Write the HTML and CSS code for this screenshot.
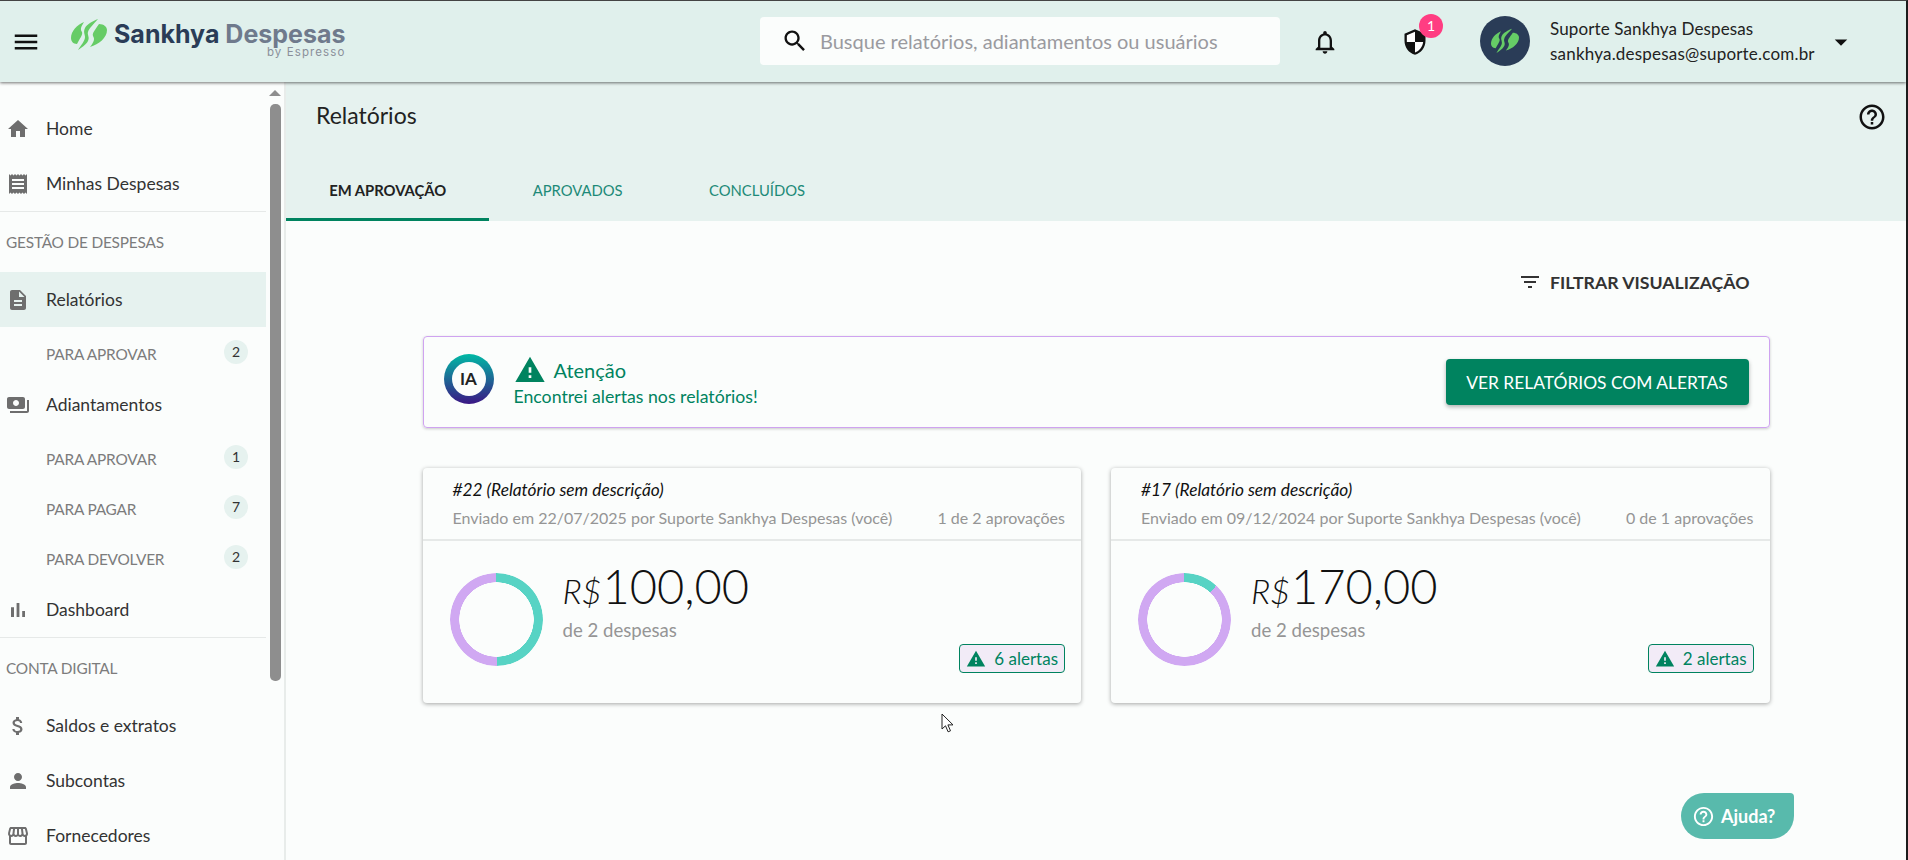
FILE: index.html
```html
<!DOCTYPE html>
<html lang="pt-BR">

<head>
  <meta charset="UTF-8" />
  <title>Sankhya Despesas</title>
  <link rel="stylesheet" href="styles.css">
</head>

<body>
  <svg class="sprites" aria-hidden="true">
    <symbol id="i-menu" viewBox="0 0 24 24"><path d="M3 18h18v-2H3v2zm0-5h18v-2H3v2zm0-7v2h18V6H3z"/></symbol>
    <symbol id="i-search" viewBox="0 0 24 24"><path d="M15.5 14h-.79l-.28-.27C15.41 12.59 16 11.11 16 9.5 16 5.91 13.09 3 9.5 3S3 5.91 3 9.5 5.91 16 9.5 16c1.61 0 3.09-.59 4.23-1.57l.27.28v.79l5 4.99L20.49 19l-4.99-5zm-6 0C7.01 14 5 11.99 5 9.5S7.01 5 9.5 5 14 7.01 14 9.5 11.99 14 9.5 14z"/></symbol>
    <symbol id="i-bell" viewBox="0 0 24 24"><path d="M12 22c1.1 0 2-.9 2-2h-4c0 1.1.9 2 2 2zm6-6v-5c0-3.07-1.63-5.64-4.5-6.32V4c0-.83-.67-1.5-1.5-1.5s-1.5.67-1.5 1.5v.68C7.64 5.36 6 7.92 6 11v5l-2 2v1h16v-1l-2-2zm-2 1H8v-6c0-2.48 1.51-4.5 4-4.5s4 2.02 4 4.5v6z"/></symbol>
    <symbol id="i-shield" viewBox="0 0 24 24">
      <path fill="#fff" d="M12 2.5L4.5 6v6H12v9.5c4-1.3 7-5 7.5-9.5H12z"/>
      <path d="M12 1L3 5v6c0 5.55 3.84 10.74 9 12 5.16-1.26 9-6.45 9-12V5l-9-4zm0 10.99h7c-.53 4.12-3.28 7.79-7 8.94V12H5V6.3l7-3.11v8.8z"/>
    </symbol>
    <symbol id="i-drop" viewBox="0 0 24 24"><path d="M7 10l5 5 5-5z"/></symbol>
    <symbol id="i-help" viewBox="0 0 24 24"><path d="M11 18h2v-2h-2v2zm1-16C6.48 2 2 6.48 2 12s4.48 10 10 10 10-4.48 10-10S17.52 2 12 2zm0 18c-4.41 0-8-3.59-8-8s3.59-8 8-8 8 3.59 8 8-3.59 8-8 8zm0-14c-2.21 0-4 1.79-4 4h2c0-1.1.9-2 2-2s2 .9 2 2c0 2-3 1.75-3 5h2c0-2.25 3-2.5 3-5 0-2.21-1.79-4-4-4z"/></symbol>
    <symbol id="i-warning" viewBox="0 0 24 24"><path d="M1 21h22L12 2 1 21zm12-3h-2v-2h2v2zm0-4h-2v-4h2v4z"/></symbol>
    <symbol id="i-filter" viewBox="0 0 24 24"><path d="M10 18h4v-2h-4v2zM3 6v2h18V6H3zm3 7h12v-2H6v2z"/></symbol>
    <symbol id="i-home" viewBox="0 0 24 24"><path d="M10 20v-6h4v6h5v-8h3L12 3 2 12h3v8z"/></symbol>
    <symbol id="i-receipt" viewBox="0 0 24 24"><path d="M18 17H6v-2h12v2zm0-4H6v-2h12v2zm0-4H6V7h12v2zM3 22l1.5-1.5L6 22l1.5-1.5L9 22l1.5-1.5L12 22l1.5-1.5L15 22l1.5-1.5L18 22l1.5-1.5L21 22V2l-1.5 1.5L18 2l-1.5 1.5L15 2l-1.5 1.5L12 2l-1.5 1.5L9 2 7.5 3.5 6 2 4.5 3.5 3 2v20z"/></symbol>
    <symbol id="i-doc" viewBox="0 0 24 24"><path d="M14 2H6c-1.1 0-1.99.9-1.99 2L4 20c0 1.1.89 2 1.99 2H18c1.1 0 2-.9 2-2V8l-6-6zm2 16H8v-2h8v2zm0-4H8v-2h8v2zm-3-5V3.5L18.5 9H13z"/></symbol>
    <symbol id="i-payments" viewBox="0 0 24 24"><path d="M19 14V6c0-1.1-.9-2-2-2H3c-1.1 0-2 .9-2 2v8c0 1.1.9 2 2 2h14c1.1 0 2-.9 2-2zm-9-1c-1.66 0-3-1.34-3-3s1.34-3 3-3 3 1.34 3 3-1.34 3-3 3zm13-6v11c0 1.1-.9 2-2 2H4v-2h17V7h2z"/></symbol>
    <symbol id="i-chart" viewBox="0 0 24 24"><path d="M5 9.2h3V19H5zM10.6 5h2.8v14h-2.8zm5.6 8H19v6h-2.8z"/></symbol>
    <symbol id="i-money" viewBox="0 0 24 24"><path d="M11.8 10.9c-2.27-.59-3-1.2-3-2.15 0-1.09 1.01-1.85 2.7-1.85 1.78 0 2.44.85 2.5 2.1h2.21c-.07-1.72-1.12-3.3-3.21-3.81V3h-3v2.16c-1.94.42-3.5 1.68-3.5 3.61 0 2.31 1.91 3.46 4.7 4.13 2.5.6 3 1.48 3 2.41 0 .69-.49 1.79-2.7 1.79-2.06 0-2.87-.92-2.98-2.1h-2.2c.12 2.19 1.76 3.42 3.68 3.83V21h3v-2.15c1.95-.37 3.5-1.5 3.5-3.55 0-2.84-2.43-3.81-4.7-4.4z"/></symbol>
    <symbol id="i-person" viewBox="0 0 24 24"><path d="M12 12c2.21 0 4-1.79 4-4s-1.79-4-4-4-4 1.79-4 4 1.79 4 4 4zm0 2c-2.67 0-8 1.34-8 4v2h16v-2c0-2.66-5.33-4-8-4z"/></symbol>
    <symbol id="i-store" viewBox="0 0 24 24"><path d="M21.9 8.89l-1.05-4.37c-.22-.9-1-1.52-1.91-1.52H5.05c-.9 0-1.69.63-1.9 1.52L2.1 8.89c-.24 1.02-.02 2.06.62 2.88.08.11.19.19.28.29V19c0 1.1.9 2 2 2h14c1.1 0 2-.9 2-2v-6.94c.09-.09.2-.18.28-.28.64-.82.87-1.87.62-2.89zm-2.99-3.9l1.05 4.37c.1.42.01.84-.25 1.17-.14.18-.44.47-.94.47-.61 0-1.14-.49-1.21-1.14L16.98 5l1.93-.01zM13 5h1.96l.54 4.52c.05.39-.07.78-.33 1.07-.22.26-.54.41-.95.41-.67 0-1.22-.59-1.22-1.31V5zM8.49 9.52L9.04 5H11v4.69c0 .72-.55 1.31-1.29 1.31-.34 0-.65-.15-.89-.41-.25-.29-.37-.68-.33-1.07zm-4.45-.16L5.05 5h1.97l-.58 4.86c-.08.65-.6 1.14-1.21 1.14-.49 0-.8-.29-.93-.47-.27-.32-.36-.75-.26-1.17zM5 19v-6.03c.08.01.15.03.23.03.87 0 1.66-.36 2.24-.95.6.6 1.4.95 2.31.95.87 0 1.65-.36 2.23-.93.59.57 1.39.93 2.29.93.84 0 1.64-.35 2.24-.95.58.59 1.37.95 2.24.95.08 0 .15-.02.23-.03V19H5z"/></symbol>
    <symbol id="i-leaf" viewBox="0 0 36 32">
      <path d="M0 20C0 13 6 7 13 4 10 9 9 11 11 14 12 17 9 20 6 26 2 26 0 23 0 20Z"/>
      <path d="M27 1C23 6 18 10 17 14 16 17 19 19 17 23 15 27 10 30 7 32 10 27 14 23 14 19 14 16 12 14 14 10 16 6 22 3 27 1Z"/>
      <path d="M36 12C36 20 28 26 19 29 23 24 24 21 22 18 21 15 24 12 28 6 33 6 36 9 36 12Z"/>
    </symbol>
  </svg>

  <!-- top bar -->
  <header class="topbar">
    <svg class="icon topbar-menu"><use href="#i-menu"/></svg>
    <div class="logo">
      <svg class="logo-leaf"><use href="#i-leaf"/></svg>
      <div class="logo-text">
        <div class="logo-name">Sankhya <span>Despesas</span></div>
        <div class="logo-by">by Espresso</div>
      </div>
    </div>
    <div class="search">
      <svg class="icon"><use href="#i-search"/></svg>
      <span>Busque relatórios, adiantamentos ou usuários</span>
    </div>
    <svg class="icon bell"><use href="#i-bell"/></svg>
    <div class="shield">
      <svg class="icon"><use href="#i-shield"/></svg>
      <span class="shield-badge">1</span>
    </div>
    <div class="avatar"><svg><use href="#i-leaf"/></svg></div>
    <div class="user">
      <div class="user-name">Suporte Sankhya Despesas</div>
      <div class="user-mail">sankhya.despesas@suporte.com.br</div>
    </div>
    <svg class="icon user-drop"><use href="#i-drop"/></svg>
  </header>

  <div class="layout">
    <!-- side menu -->
    <aside class="sidebar">
      <nav class="nav">
        <a class="nav-item"><svg class="icon"><use href="#i-home"/></svg>Home</a>
        <a class="nav-item"><svg class="icon"><use href="#i-receipt"/></svg>Minhas Despesas</a>
        <div class="nav-section">GESTÃO DE DESPESAS</div>
        <a class="nav-item active"><svg class="icon"><use href="#i-doc"/></svg>Relatórios</a>
        <a class="nav-sub">PARA APROVAR<span class="count">2</span></a>
        <a class="nav-item"><svg class="icon"><use href="#i-payments"/></svg>Adiantamentos</a>
        <a class="nav-sub">PARA APROVAR<span class="count">1</span></a>
        <a class="nav-sub">PARA PAGAR<span class="count">7</span></a>
        <a class="nav-sub">PARA DEVOLVER<span class="count">2</span></a>
        <a class="nav-item"><svg class="icon"><use href="#i-chart"/></svg>Dashboard</a>
        <div class="nav-section">CONTA DIGITAL</div>
        <a class="nav-item"><svg class="icon"><use href="#i-money"/></svg>Saldos e extratos</a>
        <a class="nav-item"><svg class="icon"><use href="#i-person"/></svg>Subcontas</a>
        <a class="nav-item"><svg class="icon"><use href="#i-store"/></svg>Fornecedores</a>
      </nav>
      <div class="scroll">
        <div class="scroll-up"></div>
        <div class="scroll-thumb"></div>
      </div>
    </aside>

    <main class="main">
      <div class="page-head">
        <div class="page-title">
          <h1>Relatórios</h1>
          <svg class="icon"><use href="#i-help"/></svg>
        </div>
        <div class="tabs">
          <a class="tab active">EM APROVAÇÃO</a>
          <a class="tab">APROVADOS</a>
          <a class="tab">CONCLUÍDOS</a>
        </div>
      </div>

      <div class="content">
        <div class="filter">
          <svg class="icon"><use href="#i-filter"/></svg>
          FILTRAR VISUALIZAÇÃO
        </div>

        <div class="notice">
          <div class="ia"><span>IA</span></div>
          <div class="notice-text">
            <div class="notice-title"><svg><use href="#i-warning"/></svg>Atenção</div>
            <div class="notice-msg">Encontrei alertas nos relatórios!</div>
          </div>
          <button class="notice-btn">VER RELATÓRIOS COM ALERTAS</button>
        </div>

        <div class="cards">
          <section class="card">
            <div class="card-head">
              <div class="card-title">#22 (Relatório sem descrição)</div>
              <div class="card-meta">
                <span>Enviado em 22/07/2025 por Suporte Sankhya Despesas (você)</span>
                <span>1 de 2 aprovações</span>
              </div>
            </div>
            <div class="card-body">
              <div class="donut" style="--part: 50%"></div>
              <div class="amount">
                <div class="amount-value"><em>R$</em>100,00</div>
                <div class="amount-sub">de 2 despesas</div>
              </div>
              <div class="chip"><svg><use href="#i-warning"/></svg>6 alertas</div>
            </div>
          </section>

          <section class="card">
            <div class="card-head">
              <div class="card-title">#17 (Relatório sem descrição)</div>
              <div class="card-meta">
                <span>Enviado em 09/12/2024 por Suporte Sankhya Despesas (você)</span>
                <span>0 de 1 aprovações</span>
              </div>
            </div>
            <div class="card-body">
              <div class="donut" style="--part: 12%"></div>
              <div class="amount">
                <div class="amount-value"><em>R$</em>170,00</div>
                <div class="amount-sub">de 2 despesas</div>
              </div>
              <div class="chip"><svg><use href="#i-warning"/></svg>2 alertas</div>
            </div>
          </section>
        </div>
      </div>
    </main>
  </div>

  <button class="ajuda"><svg><use href="#i-help"/></svg>Ajuda?</button>

  <svg class="cursor" viewBox="0 0 13 20"><path d="M1 1v15l3.5-3.2 2.6 6 2.4-1-2.6-5.9H12z"/></svg>
</body>

</html>
```

FILE: styles.css
```css
* {
  box-sizing: border-box;
}

html,
body {
  height: 100%;
}

body {
  margin: 0;
  font-family: "Lato", "Noto Sans", sans-serif;
  color: #222;
  background: #fbfdfc;
  overflow: hidden;
  border-top: 1px solid #444;
  border-right: 2px solid #1c1c1c;
}

.sprites {
  position: absolute;
  width: 0;
  height: 0;
}

.icon {
  width: 24px;
  height: 24px;
  flex: none;
  fill: currentColor;
}

/* top bar */
.topbar {
  position: relative;
  z-index: 2;
  display: flex;
  align-items: center;
  height: 81px;
  background: #e0f0ec;
  box-shadow: 0 1px 3px rgba(0, 0, 0, 0.55);
  color: #111;
}

.topbar-menu {
  width: 30px;
  height: 30px;
  margin-left: 11px;
}

.logo {
  display: flex;
  width: 689px;
  margin: 0 0 7px 30px;
}

.logo-leaf {
  width: 36px;
  height: 32px;
  margin: -1px 7px 0 0;
  fill: #66cc66;
}

.logo-name {
  font-family: "Inter", sans-serif;
  font-weight: 700;
  font-size: 25px;
  line-height: 24px;
  margin-top: 3px;
  color: #2a3c57;
}

.logo-name span {
  color: #6f7a8c;
}

.logo-by {
  font-family: "Inter", sans-serif;
  font-size: 11.5px;
  line-height: 12px;
  letter-spacing: 1.1px;
  text-align: right;
  color: #8a8f9a;
}

.search {
  display: flex;
  align-items: center;
  gap: 11px;
  width: 520px;
  height: 48px;
  margin-top: -1px;
  padding-left: 21px;
  background: #fbfdfc;
  border-radius: 4px;
  font-size: 20px;
  color: #9a9a9f;
}

.search .icon {
  width: 28px;
  height: 28px;
  color: #111;
}

.bell {
  width: 28px;
  height: 28px;
  margin-left: 31px;
}

.shield {
  position: relative;
  display: flex;
  margin-left: 62px;
}

.shield .icon {
  width: 28px;
  height: 28px;
}

.shield-badge {
  position: absolute;
  top: -14px;
  left: 18px;
  width: 24px;
  height: 24px;
  border-radius: 50%;
  background: #ff3d82;
  color: #fff;
  font-size: 14px;
  line-height: 24px;
  text-align: center;
}

.avatar {
  display: flex;
  align-items: center;
  justify-content: center;
  width: 50px;
  height: 50px;
  margin: -2px 0 0 51px;
  border-radius: 50%;
  background: #2a3c57;
}

.avatar svg {
  width: 28px;
  height: 25px;
  fill: #66cc66;
}

.user {
  margin: -2px 0 0 20px;
  font-size: 17px;
  line-height: 25px;
  color: #222;
}

.user-name {
  letter-spacing: 0.12px;
}

.user-mail {
  letter-spacing: 0.2px;
}

.user-drop {
  width: 30px;
  height: 30px;
  margin-left: 11px;
}

/* page layout */
.layout {
  display: flex;
  height: calc(100% - 81px);
}

.sidebar {
  display: flex;
  flex: none;
  width: 286px;
  height: 100%;
  overflow: hidden;
  border-right: 2px solid #e8ecea;
}

.nav {
  flex: none;
  width: 266px;
  padding-top: 19px;
}

.nav-item {
  display: flex;
  align-items: center;
  gap: 16px;
  height: 55px;
  padding-left: 6px;
  font-size: 17.5px;
  color: #333;
}

.nav-item .icon {
  color: #6e6e6e;
}

.nav-item.active {
  background: #e6f2ef;
}

.nav-sub {
  display: flex;
  align-items: center;
  justify-content: space-between;
  height: 50px;
  padding: 4px 18px 0 46px;
  font-size: 15.4px;
  letter-spacing: -0.2px;
  color: #7c7c7c;
}

.count {
  width: 24px;
  height: 24px;
  margin-top: -5px;
  border-radius: 50%;
  background: #e6f2ef;
  color: #333;
  font-size: 14px;
  line-height: 24px;
  text-align: center;
  letter-spacing: 0;
}

.nav-section {
  height: 61px;
  padding-left: 6px;
  line-height: 60px;
  font-size: 15.4px;
  letter-spacing: -0.2px;
  color: #7c7c7c;
  border-top: 1px solid #e6e9e8;
}

.scroll {
  position: relative;
  flex: 1;
}

.scroll-up {
  width: 0;
  margin: 8px 0 0 3px;
  border: 6px solid transparent;
  border-top: 0;
  border-bottom: 6px solid #8e8e8e;
}

.scroll-thumb {
  width: 11px;
  height: 577px;
  margin: 8px 0 0 4px;
  border-radius: 5px;
  background: #8e8e8e;
}

/* report area */
.main {
  flex: 1;
  min-width: 0;
}

.page-head {
  height: 139px;
  background: #e6f2ef;
}

.page-title {
  display: flex;
  align-items: center;
  justify-content: space-between;
  height: 70px;
  padding: 0 19px 0 30px;
}

.page-title h1 {
  margin: -4px 0 0;
  font-size: 23px;
  font-weight: 400;
  color: #222;
}

.page-title .icon {
  width: 30px;
  height: 30px;
  color: #111;
}

.tabs {
  display: flex;
  height: 69px;
}

.tab {
  display: flex;
  align-items: center;
  padding: 9px 43.2px 0;
  font-size: 14.8px;
  color: #1d8a78;
  border-bottom: 3px solid transparent;
}

.tab.active {
  font-weight: 700;
  color: #222;
  border-bottom-color: #00835f;
}

.content {
  width: 1347px;
  margin: 0 auto;
}

.filter {
  display: flex;
  align-items: center;
  justify-content: flex-end;
  gap: 8px;
  height: 30px;
  margin-top: 46px;
  padding-right: 20px;
  font-size: 17.7px;
  font-weight: 700;
  color: #333;
}

.notice {
  display: flex;
  align-items: center;
  height: 92px;
  margin-top: 39px;
  padding: 0 20px;
  border: 1px solid #cfa3f0;
  border-radius: 4px;
  box-shadow: 0 1px 3px rgba(0, 0, 0, 0.2);
}

.ia {
  display: flex;
  align-items: center;
  justify-content: center;
  width: 50px;
  height: 50px;
  margin-top: -6px;
  border-radius: 50%;
  background: linear-gradient(#00b9a5, #3b1785);
}

.ia span {
  width: 34px;
  height: 34px;
  border-radius: 50%;
  background: #fbfdfc;
  color: #222;
  font-size: 17px;
  font-weight: 700;
  line-height: 34px;
  text-align: center;
}

.notice-text {
  flex: 1;
  margin-left: 20px;
  color: #00835f;
}

.notice-title {
  display: flex;
  align-items: center;
  gap: 8px;
  height: 29px;
  margin-top: -1px;
  font-size: 20px;
}

.notice-title svg {
  width: 32px;
  height: 32px;
  fill: #00835f;
}

.notice-msg {
  margin-top: 1px;
  font-size: 17.7px;
  line-height: 22px;
}

.notice-btn {
  width: 303px;
  height: 46px;
  border: 0;
  border-radius: 4px;
  background: #00835f;
  box-shadow: 0 2px 4px rgba(0, 0, 0, 0.3);
  color: #fff;
  font-family: inherit;
  font-size: 17.4px;
}

.cards {
  display: flex;
  gap: 30px;
  margin-top: 40px;
}

.card {
  flex: 1;
  height: 235px;
  border-radius: 4px;
  box-shadow: 0 1px 4px rgba(0, 0, 0, 0.35);
}

.card-head {
  height: 73px;
  padding: 11px 16px 0 30px;
  border-bottom: 2px solid #e6e9e8;
}

.card-title {
  font-size: 17.3px;
  line-height: 22px;
  font-style: italic;
  color: #111;
}

.card-meta {
  display: flex;
  justify-content: space-between;
  margin-top: 7px;
  font-size: 16px;
  line-height: 20px;
  color: #959595;
}

.card-body {
  display: flex;
  height: 162px;
  padding: 32px 16px 30px 27px;
}

.donut {
  flex: none;
  width: 93px;
  height: 93px;
  border-radius: 50%;
  background: conic-gradient(#57d3c4 var(--part), #d0a8f2 0);
  -webkit-mask: radial-gradient(circle, transparent 37px, #000 37.5px);
  mask: radial-gradient(circle, transparent 37px, #000 37.5px);
}

.amount {
  flex: 1;
  margin: -15px 0 0 20px;
}

.amount-value {
  font-size: 47px;
  font-weight: 300;
  line-height: 56px;
  color: #111;
}

.amount-value em {
  margin-right: 1px;
  font-size: 34px;
}

.amount-sub {
  margin-top: 0;
  font-size: 18.6px;
  color: #959595;
}

.chip {
  display: flex;
  align-items: center;
  gap: 8px;
  align-self: flex-end;
  height: 29px;
  padding: 0 6px;
  border: 1px solid #00835f;
  border-radius: 4px;
  background: #f2ebf7;
  color: #00835f;
  font-size: 17px;
}

.chip svg {
  width: 20px;
  height: 20px;
  fill: #00835f;
}

/* things that float over the page */
.ajuda {
  position: absolute;
  left: 1681px;
  top: 793px;
  display: flex;
  align-items: center;
  gap: 6px;
  width: 113px;
  height: 46px;
  padding: 0 0 0 11px;
  border: 0;
  border-radius: 23px 4px 23px 23px;
  background: #58baac;
  color: #fff;
  font-family: inherit;
  font-size: 18px;
  font-weight: 700;
}

.ajuda svg {
  width: 23px;
  height: 23px;
  fill: #fff;
}

.cursor {
  position: absolute;
  left: 941px;
  top: 713px;
  width: 13px;
  height: 20px;
  fill: #fff;
  stroke: #222;
  stroke-width: 1;
}
```
